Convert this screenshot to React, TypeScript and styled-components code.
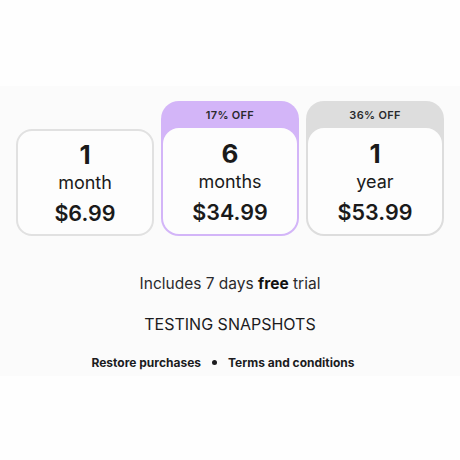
import React from "react";
import styled, { createGlobalStyle } from "styled-components";

const Global = createGlobalStyle`
  html, body { margin: 0; padding: 0; background: #fefefe; }
  body { font-family: Inter, "Noto Sans", sans-serif; color: #1c1c1e; }
`;

const Page = styled.div`
  width: 460px;
  height: 460px;
  display: flex;
  flex-direction: column;
  padding-top: 86px;
  box-sizing: border-box;
`;

const Sheet = styled.div`
  background: #fbfbfb;
  padding: 15px 16px 0;
  height: 290px;
  box-sizing: border-box;
  display: flex;
  flex-direction: column;
  align-items: center;
`;

const Plans = styled.div`
  display: grid;
  grid-template-columns: repeat(3, 138px);
  gap: 7px;
  align-items: end;
  width: 100%;
`;

const Badge = styled.div<{ $tone: string }>`
  background: ${(p) => p.$tone};
  border-radius: 18px;
  padding: 0 2px 2px;
  display: flex;
  flex-direction: column;
`;

const BadgeLabel = styled.div`
  height: 27px;
  display: flex;
  align-items: center;
  justify-content: center;
  font-size: 11px;
  font-weight: 600;
  letter-spacing: 0.3px;
  color: #2a2a2c;
`;

const Card = styled.div<{ $border?: string }>`
  background: #fdfdfd;
  border-radius: 16px;
  height: ${(p) => (p.$border ? "107px" : "106px")};
  box-sizing: border-box;
  border: ${(p) => (p.$border ? `2px solid ${p.$border}` : "none")};
  padding-top: ${(p) => (p.$border ? "3px" : "4px")};
  display: flex;
  flex-direction: column;
  align-items: center;
  justify-content: center;
`;

const Count = styled.div`
  font-size: 26px;
  font-weight: 700;
  line-height: 29px;
  color: #1a1a1a;
`;

const Unit = styled.div`
  font-size: 18px;
  font-weight: 400;
  line-height: 28px;
  color: #1a1a1a;
`;

const Price = styled.div`
  font-size: 21.5px;
  font-weight: 600;
  line-height: 32px;
  color: #1a1a1a;
`;

const Trial = styled.div`
  margin-top: 37px;
  font-size: 15.5px;
  line-height: 22px;
  color: #2a2a2c;
  b { font-weight: 700; color: #111; }
`;

const Title = styled.div`
  margin-top: 18px;
  font-size: 16px;
  line-height: 22px;
  color: #1c1c1e;
`;

const Links = styled.div`
  margin-top: 20px;
  padding-right: 14px;
  display: flex;
  align-items: center;
  gap: 11px;
  font-size: 12px;
  font-weight: 700;
  color: #1c1c1e;
`;

const Dot = styled.span`
  width: 5px;
  height: 5px;
  border-radius: 50%;
  background: #1c1c1e;
`;

type Plan = { count: string; unit: string; price: string; off?: string; tone?: string };

const plans: Plan[] = [
  { count: "1", unit: "month", price: "$6.99" },
  { count: "6", unit: "months", price: "$34.99", off: "17% OFF", tone: "#d3b5f8" },
  { count: "1", unit: "year", price: "$53.99", off: "36% OFF", tone: "#dddddd" },
];

const Body = ({ p }: { p: Plan }) => (
  <>
    <Count>{p.count}</Count>
    <Unit>{p.unit}</Unit>
    <Price>{p.price}</Price>
  </>
);

export default function App() {
  return (
    <>
      <Global />
      <Page>
        <Sheet>
          <Plans>
            {plans.map((p, i) =>
              p.off ? (
                <Badge key={i} $tone={p.tone!}>
                  <BadgeLabel>{p.off}</BadgeLabel>
                  <Card>
                    <Body p={p} />
                  </Card>
                </Badge>
              ) : (
                <Card key={i} $border="#e1e1e1">
                  <Body p={p} />
                </Card>
              )
            )}
          </Plans>
          <Trial>
            Includes 7 days <b>free</b> trial
          </Trial>
          <Title>TESTING SNAPSHOTS</Title>
          <Links>
            <span>Restore purchases</span>
            <Dot />
            <span>Terms and conditions</span>
          </Links>
        </Sheet>
      </Page>
    </>
  );
}
